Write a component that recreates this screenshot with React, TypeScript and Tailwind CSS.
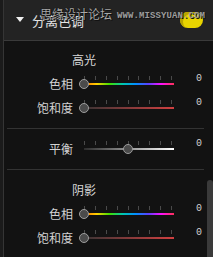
import React from 'react';

const ticks = [0, 1, 2, 3, 4, 5, 6, 7, 8];

const hue =
  'bg-[linear-gradient(to_right,#ff6a00,#ffd200,#40e000,#00c8b0,#0090ff,#5a40ff,#ff10ff,#ff3058)]';
const sat = 'bg-[linear-gradient(to_right,#3a3434,#d04040)]';
const bal = 'bg-[linear-gradient(to_right,#2e2e2e,#ffffff)]';

function Slider({ label, track, knob }: { label: string; track: string; knob: number }) {
  return (
    <div className="flex h-[24px] items-center">
      <div className="w-[69px] text-right text-[12px] leading-none text-[#d2d2d2]">{label}</div>
      <div className="relative ml-[9px] h-[24px] w-[92px]">
        {/* ticks */}
        <div className="absolute left-[2px] right-[2px] top-[4px] flex justify-between">
          {ticks.map((t) => (
            <div key={t} className="h-[4px] w-px bg-[#4a4a4a]" />
          ))}
        </div>
        <div className={`absolute left-[2px] right-0 top-[11px] h-[2px] ${track}`} />
        <div
          className="absolute top-[7px] h-[10px] w-[10px] -translate-x-1/2 rounded-full border-[1.5px] border-[#9c9c9c] bg-[#4b4b4b]"
          style={{ left: knob }}
        />
      </div>
      <div className="ml-auto mr-[5px] -mt-[10px] font-['Liberation_Mono',monospace] text-[10px] leading-none text-[#d0d0d0]">
        0
      </div>
    </div>
  );
}

function Title({ text }: { text: string }) {
  return (
    <div className="flex h-[24px] items-center pl-[68px] text-[12px] leading-none text-[#d6d6d6]">{text}</div>
  );
}

export default function App() {
  return (
    <div className="flex h-[257px] w-[213px] overflow-hidden bg-[#1b1b1b] font-['Noto_Sans_CJK_SC','Noto_Sans',sans-serif]">
      <div className="w-[3px]" />
      <div className="flex flex-1 flex-col border-l border-[#353535]">
        {/* header */}
        <div className="relative flex h-[41px] items-center border-b border-[#3a3a3a] bg-[#232323]">
          <svg className="ml-[12px]" width="8" height="6" viewBox="0 0 8 6">
            <polygon points="0,0 8,0 4,5" fill="#f0f0f0" />
          </svg>
          <span className="ml-[8px] text-[13px] leading-none text-[#e4e4e4]">分离色调</span>
          {/* watermark */}
          <span className="absolute left-[36px] top-[8px] text-[12px] leading-none text-[#a8a8a8] [text-shadow:0_0_1px_#000,1px_1px_0_#111]">
            思缘设计论坛
          </span>
          <div className="absolute left-[176px] top-[12px] h-[16px] w-[23px] rounded-full bg-[#e8d400] shadow-[inset_3px_2px_0_#b8a400]" />
          <span className="absolute left-[113px] top-[12px] font-['Liberation_Mono',monospace] text-[9px] font-bold leading-none tracking-[0.1px] text-[#9c9c9c] [text-shadow:1px_1px_0_#111]">
            WWW.MISSYUAN.COM
          </span>
        </div>
        <div className="flex flex-1 bg-[#121212]">
          <div className="flex flex-1 flex-col pt-[7px]">
            <Title text="高光" />
            <Slider label="色相" track={hue} knob={2} />
            <Slider label="饱和度" track={sat} knob={2} />
            <div className="mx-[3px] mt-[8px] h-px bg-[#333]" />
            <div className="py-[8px]">
              <Slider label="平衡" track={bal} knob={46} />
            </div>
            <div className="mx-[3px] h-px bg-[#333]" />
            <div className="pt-[8px]">
              <Title text="阴影" />
              <Slider label="色相" track={hue} knob={2} />
              <Slider label="饱和度" track={sat} knob={2} />
            </div>
          </div>
          <div className="w-[6px] pt-[139px]">
            <div className="h-full rounded-t-[3px] bg-[#3a3a3a]" />
          </div>
        </div>
      </div>
    </div>
  );
}
